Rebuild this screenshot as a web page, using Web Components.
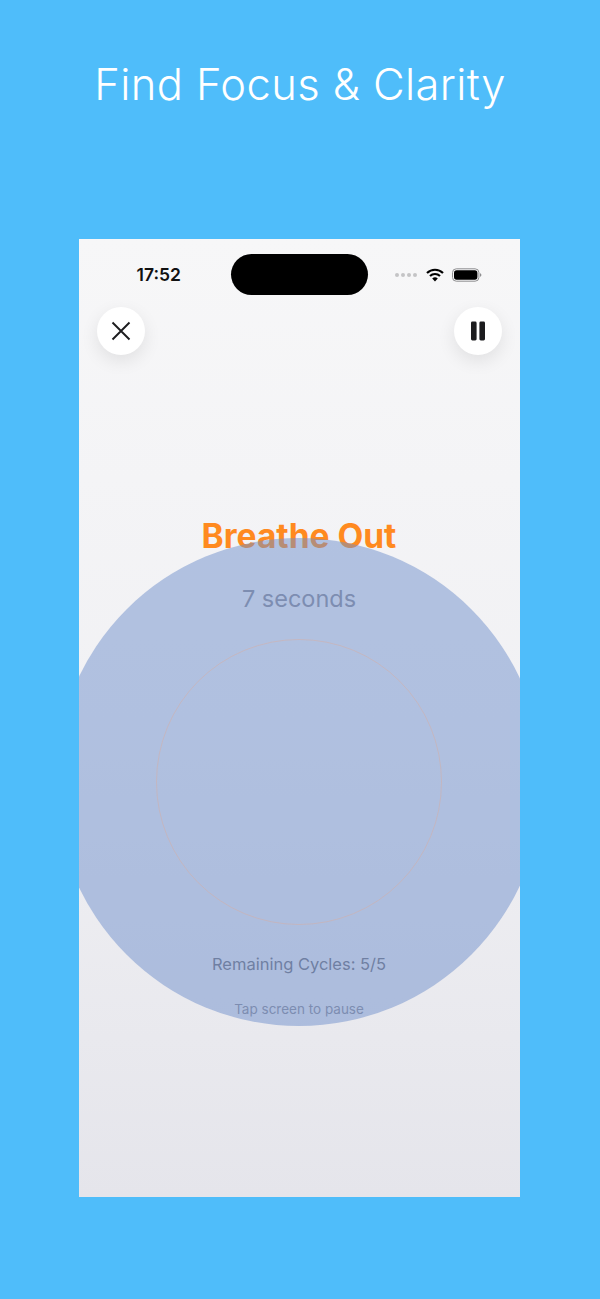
<!DOCTYPE html>
<html>
<head>
<meta charset="utf-8">
<style>
html, body { margin: 0; padding: 0; }
body { width: 600px; height: 1299px; overflow: hidden; background: #4fbdfa; font-family: Inter, "Liberation Sans", sans-serif; }
</style>
</head>
<body>
<promo-page>
  <span slot="title">Find Focus &amp; Clarity</span>
  <phone-screen></phone-screen>
</promo-page>

<script>
class PromoPage extends HTMLElement {
  constructor() {
    super()
    this.attachShadow({ mode: 'open' }).innerHTML = `
<style>
:host { display: flex; flex-direction: column; align-items: center; width: 600px; height: 1299px; padding-left: 0; box-sizing: border-box; }
.title { height: 239px; box-sizing: border-box; padding-top: 54px; font-size: 43.5px; line-height: 60px; font-weight: 300; letter-spacing: 0.4px; color: #fff; white-space: nowrap; }
</style>
<div class="title"><slot name="title"></slot></div>
<slot></slot>
`
  }
}

class StatusBar extends HTMLElement {
  constructor() {
    super()
    this.attachShadow({ mode: 'open' }).innerHTML = `
<style>
:host { display: flex; align-items: center; height: 41px; margin-top: 15px; position: relative; }
.time { margin-left: 58px; width: 94px; font-size: 17.5px; font-weight: 600; color: #111; line-height: 41px; }
.island { width: 137px; height: 41px; border-radius: 20.5px; background: #000; }
.dots { display: flex; gap: 2px; margin-left: 27px; }
.dots i { width: 4px; height: 4px; border-radius: 50%; background: #c4c4c6; }
.wifi { margin-left: 9px; display: block; }
.battery { margin-left: 8px; display: block; }
</style>
<div class="time">17:52</div>
<div class="island"></div>
<div class="dots"><i></i><i></i><i></i><i></i></div>
<svg class="wifi" width="18" height="14" viewBox="0 0 18 14">
  <path d="M1 5a11.5 11.5 0 0 1 16 0" fill="none" stroke="#000" stroke-width="2.2"/>
  <path d="M4 8a7.2 7.2 0 0 1 10 0" fill="none" stroke="#000" stroke-width="2.2"/>
  <path d="M9 13.5l-2.8-3a4 4 0 0 1 5.6 0z" fill="#000"/>
</svg>
<svg class="battery" width="30" height="14" viewBox="0 0 30 14">
  <rect x="0.5" y="0.8" width="26.4" height="12.4" rx="3.8" fill="none" stroke="#8e8e90" stroke-width="1"/>
  <rect x="2" y="2.3" width="23.4" height="9.4" rx="2.6" fill="#000"/>
  <path d="M28 5.2c1 .3 1.4 1 1.4 1.8s-.4 1.5-1.4 1.8z" fill="#8e8e90"/>
</svg>
`
  }
}

class RoundButton extends HTMLElement {
  constructor() {
    super()
    this.attachShadow({ mode: 'open' }).innerHTML = `
<style>
:host { display: flex; align-items: center; justify-content: center; width: 48px; height: 48px; border-radius: 50%; background: #fff; box-shadow: 0 6px 18px rgba(0,0,0,0.09); }
</style>
<slot></slot>
`
  }
}

class BreathText extends HTMLElement {
  constructor() {
    super()
    this.attachShadow({ mode: 'open' }).innerHTML = `
<style>
:host { display: flex; flex-direction: column; align-items: center; }
.phase { font-size: 33.5px; line-height: 40px; font-weight: 700; color: #ff8a1f; margin-top: 161px; white-space: nowrap; }
.secs { font-size: 23.5px; line-height: 30px; font-weight: 400; color: #8a8a96; margin-top: 28px; }
.cycles { font-size: 16.5px; line-height: 22px; color: #6f6f78; margin-top: 339px; }
.hint { font-size: 13.5px; line-height: 18px; color: #8a8a96; margin-top: 25px; }
</style>
<div class="phase">Breathe Out</div>
<div class="secs">7 seconds</div>
<div class="cycles">Remaining Cycles: 5/5</div>
<div class="hint">Tap screen to pause</div>
`
  }
}

class BreathCircle extends HTMLElement {
  constructor() {
    super()
    this.attachShadow({ mode: 'open' }).innerHTML = `
<style>
/* sits over the text, the text shows through */
:host { display: flex; align-items: center; justify-content: center; position: absolute; left: -23.5px; top: 299px; width: 488px; height: 488px; border-radius: 50%; background: rgba(112, 143, 204, 0.5); }
.ring { width: 286px; height: 286px; box-sizing: border-box; border-radius: 50%; border: 1.5px solid rgba(222, 170, 150, 0.42); }
</style>
<div class="ring"></div>
`
  }
}

class PhoneScreen extends HTMLElement {
  constructor() {
    super()
    this.attachShadow({ mode: 'open' }).innerHTML = `
<style>
:host { display: block; position: relative; overflow: hidden; width: 441px; height: 958px; margin-right: 2px; background: linear-gradient(#f7f7f8, #f1f1f4 50%, #e5e5eb); }
.buttons { display: flex; justify-content: space-between; padding: 12px 18px 0; }
svg { display: block; }
</style>
<status-bar></status-bar>
<div class="buttons">
  <round-button>
    <svg width="22" height="22" viewBox="0 0 22 22"><path d="M2.5 2.5l17 17M19.5 2.5l-17 17" stroke="#1c1c1e" stroke-width="1.9" fill="none"/></svg>
  </round-button>
  <round-button>
    <svg width="16" height="20" viewBox="0 0 16 20"><rect x="1" y="0.5" width="5.6" height="19" rx="1.4" fill="#1c1c1e"/><rect x="9.4" y="0.5" width="5.6" height="19" rx="1.4" fill="#1c1c1e"/></svg>
  </round-button>
</div>
<breath-text></breath-text>
<breath-circle></breath-circle>
`
  }
}

customElements.define('promo-page', PromoPage)
customElements.define('status-bar', StatusBar)
customElements.define('round-button', RoundButton)
customElements.define('breath-text', BreathText)
customElements.define('breath-circle', BreathCircle)
customElements.define('phone-screen', PhoneScreen)
</script>
</body>
</html>
